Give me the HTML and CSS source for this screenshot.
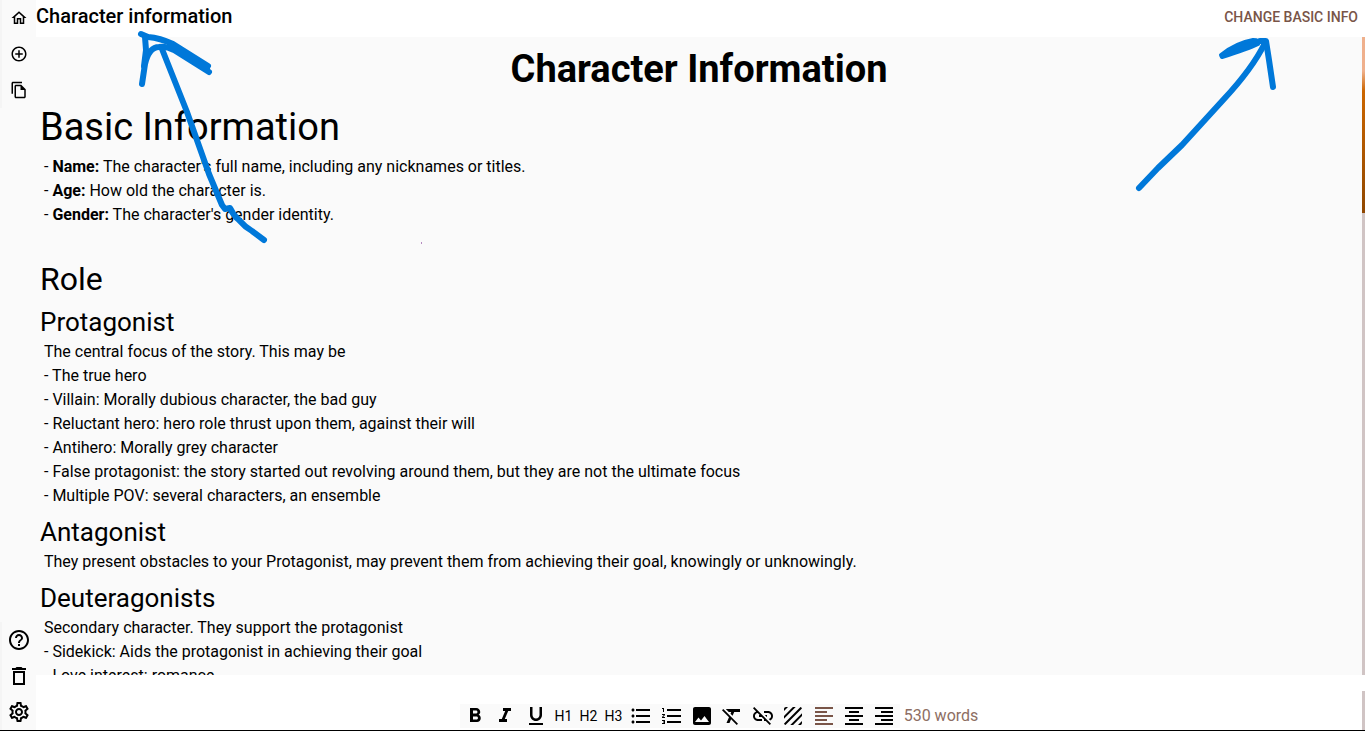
FILE: index.html
```html
<!DOCTYPE html>
<html lang="en">
<head>
<meta charset="utf-8">
<meta name="viewport" content="width=device-width, initial-scale=1">
<title>Character information</title>
<link rel="stylesheet" href="styles.css">
</head>
<body>
<div class="app">
  <nav class="sidebar" aria-label="Main">
    <div class="sidebar-group">
      <button class="nav-button" aria-label="Home"><svg class="icon-small" viewBox="0 0 24 24"><path d="M12 5.69l5 4.5V18h-2v-6H9v6H7v-7.81l5-4.5M12 3L2 12h3v8h6v-6h2v6h6v-8h3L12 3z"/></svg></button>
      <button class="nav-button" aria-label="Add"><svg class="icon-small" viewBox="0 0 24 24"><path d="M13 7h-2v4H7v2h4v4h2v-4h4v-2h-4V7zm-1-5C6.48 2 2 6.48 2 12s4.48 10 10 10 10-4.48 10-10S17.52 2 12 2zm0 18c-4.41 0-8-3.59-8-8s3.59-8 8-8 8 3.59 8 8-3.59 8-8 8z"/></svg></button>
      <button class="nav-button" aria-label="Copy"><svg class="icon-small" viewBox="0 0 24 24"><path d="M16 1H4c-1.1 0-2 .9-2 2v14h2V3h12V1zm-1 4H8c-1.1 0-1.99.9-1.99 2L6 21c0 1.1.89 2 1.99 2H19c1.1 0 2-.9 2-2V11l-6-6zM8 21V7h6v5h5v9H8z"/></svg></button>
    </div>
    <div class="sidebar-group">
      <button class="nav-button" aria-label="Help"><svg class="icon" viewBox="0 0 24 24"><path d="M11 18h2v-2h-2v2zm1-16C6.48 2 2 6.48 2 12s4.48 10 10 10 10-4.48 10-10S17.52 2 12 2zm0 18c-4.41 0-8-3.59-8-8s3.59-8 8-8 8 3.59 8 8-3.59 8-8 8zm0-14c-2.21 0-4 1.79-4 4h2c0-1.1.9-2 2-2s2 .9 2 2c0 2-3 1.75-3 5h2c0-2.25 3-2.5 3-5 0-2.21-1.79-4-4-4z"/></svg></button>
      <button class="nav-button" aria-label="Trash"><svg class="icon" viewBox="0 0 24 24"><path d="M6 21h12V7H6v14zM8 9h8v10H8V9zm7.500-5l-1-1h-5l-1 1H5v2h14V4h-3.500z"/></svg></button>
      <button class="nav-button" aria-label="Settings"><svg class="icon" viewBox="0 0 24 24"><path d="M19.430 12.980c.04-.32.07-.64.07-.98 0-.34-.03-.66-.07-.98l2.110-1.650c.19-.15.24-.42.12-.64l-2-3.460c-.09-.16-.26-.25-.44-.25-.06 0-.12.01-.17.03l-2.490 1c-.52-.4-1.080-.73-1.690-.98l-.38-2.650C14.460 2.180 14.250 2 14 2h-4c-.25 0-.46.18-.49.42l-.38 2.650c-.61.25-1.170.59-1.690.98l-2.490-1c-.06-.02-.12-.03-.18-.03-.17 0-.34.09-.43.25l-2 3.460c-.13.22-.07.49.12.64l2.110 1.650c-.04.32-.07.65-.07.98 0 .33.03.66.07.98l-2.110 1.650c-.19.15-.24.42-.12.64l2 3.460c.09.16.26.25.44.25.06 0 .12-.01.17-.03l2.490-1c.52.4 1.080.73 1.690.98l.38 2.650c.03.24.24.42.49.42h4c.25 0 .46-.18.49-.42l.38-2.650c.61-.25 1.170-.59 1.690-.98l2.490 1c.06.02.12.03.18.03.17 0 .34-.09.43-.25l2-3.460c.12-.22.07-.49-.12-.64l-2.110-1.650zm-1.980-1.710c.04.31.05.52.05.73 0 .21-.02.43-.05.73l-.14 1.130.89.7 1.080.84-.7 1.210-1.270-.51-1.040-.42-.9.68c-.43.32-.84.56-1.250.73l-1.060.43-.16 1.130-.2 1.350h-1.400l-.19-1.350-.16-1.130-1.060-.43c-.43-.18-.83-.41-1.230-.71l-.91-.7-1.060.43-1.270.51-.7-1.210 1.080-.84.89-.7-.14-1.130c-.03-.31-.05-.54-.05-.74s.02-.43.05-.73l.14-1.130-.89-.7-1.080-.84.7-1.210 1.270.51 1.040.42.9-.68c.43-.32.84-.56 1.250-.73l1.060-.43.16-1.130.2-1.350h1.390l.19 1.350.16 1.130 1.060.43c.43.18.83.41 1.230.71l.91.7 1.060-.43 1.270-.51.7 1.210-1.070.85-.89.7.14 1.130zM12 8c-2.210 0-4 1.790-4 4s1.790 4 4 4 4-1.790 4-4-1.790-4-4-4zm0 6c-1.100 0-2-.9-2-2s.9-2 2-2 2 .9 2 2-.9 2-2 2z"/></svg></button>
    </div>
  </nav>

  <div class="workspace">
    <header class="topbar">
      <span class="doc-name">Character information</span>
      <button class="change-button">CHANGE BASIC INFO</button>
    </header>

    <div class="document">
      <main class="page">
        <h1 class="title">Character Information</h1>
        <h2 class="heading">Basic Information</h2>
        <p class="line">- <b>Name:</b> The character's full name, including any nicknames or titles.</p>
        <p class="line">- <b>Age:</b> How old the character is.</p>
        <p class="line">- <b>Gender:</b> The character's gender identity.</p>
        <p class="line"><br></p>
        <h3 class="section">Role</h3>
        <h4 class="subsection">Protagonist</h4>
        <p class="line">The central focus of the story. This may be</p>
        <p class="line">- The true hero</p>
        <p class="line">- Villain: Morally dubious character, the bad guy</p>
        <p class="line">- Reluctant hero: hero role thrust upon them, against their will</p>
        <p class="line">- Antihero: Morally grey character</p>
        <p class="line">- False protagonist: the story started out revolving around them, but they are not the ultimate focus</p>
        <p class="line">- Multiple POV: several characters, an ensemble</p>
        <h4 class="subsection">Antagonist</h4>
        <p class="line">They present obstacles to your Protagonist, may prevent them from achieving their goal, knowingly or unknowingly.</p>
        <h4 class="subsection">Deuteragonists</h4>
        <p class="line">Secondary character. They support the protagonist</p>
        <p class="line">- Sidekick: Aids the protagonist in achieving their goal</p>
        <p class="line">- Love interest: romance</p>
      </main>
      <div class="scroll-track"><div class="scroll-thumb"></div></div>
    </div>

    <footer class="footer">
      <div class="toolbar-row">
        <div class="toolbar" role="toolbar" aria-label="Formatting">
          <button class="tool" aria-label="Bold"><svg class="icon" viewBox="0 0 24 24"><path d="M15.600 10.790c.97-.67 1.650-1.770 1.650-2.790 0-2.260-1.750-4-4-4H7v14h7.040c2.090 0 3.710-1.700 3.710-3.790 0-1.520-.86-2.820-2.150-3.420zM10 6.500h3c.83 0 1.500.67 1.500 1.500s-.67 1.500-1.500 1.500h-3v-3zm3.500 9H10v-3h3.500c.83 0 1.500.67 1.500 1.500s-.67 1.500-1.500 1.500z"/></svg></button>
          <button class="tool" aria-label="Italic"><svg class="icon" viewBox="0 0 24 24"><path d="M10 4v3h2.210l-3.420 8H6v3h8v-3h-2.210l3.420-8H18V4z"/></svg></button>
          <button class="tool" aria-label="Underline"><svg class="icon" viewBox="0 0 24 24"><path d="M12 17c3.310 0 6-2.690 6-6V3h-2.500v8c0 1.930-1.570 3.500-3.500 3.500S8.500 12.930 8.500 11V3H6v8c0 3.310 2.690 6 6 6zm-7 2v2h14v-2H5z"/></svg></button>
          <button class="tool">H1</button>
          <button class="tool">H2</button>
          <button class="tool">H3</button>
          <button class="tool" aria-label="Bulleted list"><svg class="icon" viewBox="0 0 24 24"><path d="M4 10.500c-.83 0-1.500.67-1.500 1.500s.67 1.500 1.500 1.500 1.500-.67 1.500-1.500-.67-1.500-1.500-1.500zm0-6c-.83 0-1.500.67-1.500 1.500S3.170 7.500 4 7.500 5.500 6.830 5.500 6 4.830 4.500 4 4.500zm0 12c-.83 0-1.500.68-1.500 1.500s.68 1.500 1.500 1.500 1.500-.68 1.500-1.500-.67-1.500-1.500-1.500zM7 19h14v-2H7v2zm0-6h14v-2H7v2zm0-8v2h14V5H7z"/></svg></button>
          <button class="tool" aria-label="Numbered list"><svg class="icon" viewBox="0 0 24 24"><path d="M2 17h2v.5H3v1h1v.5H2v1h3v-4H2v1zm1-9h1V4H2v1h1v3zm-1 3h1.800L2 13.100v.9h3v-1H3.200L5 10.900V10H2v1zm5-6v2h14V5H7zm0 14h14v-2H7v2zm0-6h14v-2H7v2z"/></svg></button>
          <button class="tool" aria-label="Image"><svg class="icon" viewBox="0 0 24 24"><path d="M21 19V5c0-1.100-.9-2-2-2H5c-1.100 0-2 .9-2 2v14c0 1.100.9 2 2 2h14c1.100 0 2-.9 2-2zM8.500 13.500l2.500 3.010L14.500 12l4.500 6H5l3.500-4.500z"/></svg></button>
          <button class="tool" aria-label="Clear formatting"><svg class="icon" viewBox="0 0 24 24"><path d="M3.270 5L2 6.270l6.970 6.970L6.500 19h3l1.570-3.660L16.730 21 18 19.730 3.550 5.270 3.270 5zM6 5v.18L8.820 8h2.400l-.72 1.680 2.100 2.100L14.210 8H20V5H6z"/></svg></button>
          <button class="tool" aria-label="Remove link"><svg class="icon" viewBox="0 0 24 24"><path d="M17 7h-4v1.900h4c1.710 0 3.100 1.390 3.100 3.100 0 1.430-.98 2.630-2.310 2.980l1.460 1.460C20.880 15.610 22 13.950 22 12c0-2.760-2.240-5-5-5zm-1 4h-2.190l2 2H16v-2zM2 4.270l3.110 3.110C3.290 8.120 2 9.910 2 12c0 2.760 2.240 5 5 5h4v-1.900H7c-1.710 0-3.100-1.390-3.100-3.100 0-1.590 1.210-2.900 2.760-3.070L8.730 11H8v2h2.730L13 15.270V17h1.730l4.010 4L20 19.740 3.270 3 2 4.270z"/></svg></button>
          <button class="tool" aria-label="Texture"><svg class="icon" viewBox="0 0 24 24"><path d="M19.510 3.080L3.080 19.510c.09.34.27.65.51.9.25.24.56.42.9.51L20.930 4.490c-.19-.69-.73-1.230-1.420-1.410zM11.880 3L3 11.880v2.830L14.710 3h-2.830zM5 3c-1.100 0-2 .9-2 2v2l4-4H5zm14 18c.55 0 1.050-.22 1.410-.59.37-.36.59-.86.59-1.410v-2l-4 4h2zm-9.710 0h2.830L21 12.120V9.290L9.290 21z"/></svg></button>
          <button class="tool tool-active" aria-label="Align left" aria-pressed="true"><svg class="icon" viewBox="0 0 24 24"><path d="M15 15H3v2h12v-2zm0-8H3v2h12V7zM3 13h18v-2H3v2zm0 8h18v-2H3v2zM3 3v2h18V3H3z"/></svg></button>
          <button class="tool" aria-label="Align center"><svg class="icon" viewBox="0 0 24 24"><path d="M7 15v2h10v-2H7zm-4 6h18v-2H3v2zm0-8h18v-2H3v2zm4-6v2h10V7H7zM3 3v2h18V3H3z"/></svg></button>
          <button class="tool" aria-label="Align right"><svg class="icon" viewBox="0 0 24 24"><path d="M3 21h18v-2H3v2zm6-4h12v-2H9v2zm-6-4h18v-2H3v2zm6-4h12V7H9v2zM3 3v2h18V3H3z"/></svg></button>
        </div>
        <span class="word-count">530 words</span>
      </div>
      <div class="outer-track"></div>
    </footer>
  </div>

  <svg class="ink ink-left" viewBox="0 0 430 250" aria-hidden="true">
    <path d="M141 34L148 37Q160 38 173 44L208 66"/>
    <path d="M142 84L145 64Q149 47 159 47Q166 46 174 50L209 72"/>
    <path d="M172 47L207 69M145 37L146 50L144 66"/>
    <path d="M162 49L187 112L209 174L222 205L225 209L230 208Q233 215 239 220Q245 227 252 231L264 240"/>
    <path class="ink-speck" d="M421.500 242v2"/>
  </svg>
  <svg class="ink ink-right" viewBox="1115 0 250 250" aria-hidden="true">
    <path d="M1139 188L1158 168L1182 145L1224 99Q1252 69 1265 43"/>
    <path d="M1260 41L1266 41L1269 60L1273 87"/>
    <path class="ink-blob" d="M1221 55Q1236 43 1253 40Q1260 40 1258 44Q1248 49 1222 57Z"/>
  </svg>
</div>
</body>
</html>
```
FILE: styles.css
```css
* {
  box-sizing: border-box;
}

body {
  margin: 0;
  background: #fafafa;
  color: #000;
  font-family: Roboto, "Liberation Sans", sans-serif;
  font-size: 16px;
  line-height: 24px;
}

button {
  margin: 0;
  padding: 0;
  border: 0;
  background: none;
  color: inherit;
  font: inherit;
  cursor: pointer;
}

svg {
  display: block;
  fill: currentColor;
}

.app {
  position: relative;
  display: flex;
  height: 100vh;
  border-bottom: 1px solid #000;
  overflow: hidden;
}

.sidebar {
  display: flex;
  flex: none;
  flex-direction: column;
  justify-content: space-between;
  width: 36px;
}

.sidebar-group {
  display: flex;
  flex-direction: column;
  border-left: 2px solid #f5f5f5;
}

.nav-button {
  display: grid;
  place-items: center;
  height: 36px;
}

.icon {
  width: 24px;
  height: 24px;
}

.icon-small {
  width: 18px;
  height: 18px;
}

.workspace {
  display: flex;
  flex: 1;
  flex-direction: column;
  min-width: 0;
}

.topbar {
  display: flex;
  flex: none;
  align-items: center;
  justify-content: space-between;
  height: 37px;
  padding: 0 7px 6px 0;
  background: #fff;
}

.doc-name {
  font-size: 20px;
  font-weight: 500;
}

.change-button {
  padding-top: 2px;
  color: #795548;
  font-size: 14px;
  font-weight: 500;
}

.document {
  display: flex;
  flex: 1;
  min-height: 0;
}

.page {
  flex: 1;
  min-width: 0;
  padding: 8px 4px 0;
  overflow: hidden;
}

.title,
.heading,
.section,
.subsection,
.line {
  margin: 0;
}

.title {
  font-size: 38px;
  font-weight: 700;
  line-height: 48px;
  text-align: center;
}

.heading {
  padding: 10px 0 4px;
  font-size: 38px;
  font-weight: 400;
  line-height: 48px;
}

.section {
  padding-top: 9px;
  font-size: 32px;
  font-weight: 400;
  line-height: 38px;
}

.subsection {
  padding: 8px 0 2px;
  font-size: 26px;
  font-weight: 400;
  line-height: 32px;
}

.line {
  padding-left: 4px;
}

.scroll-track {
  flex: none;
  width: 3px;
  background: #d0c4c4;
}

.scroll-thumb {
  height: 176px;
  background: linear-gradient(#efb08c 0, #efb08c 34px, #cc6600 54px, #8f4700 100%);
}

.footer {
  display: flex;
  flex: none;
  height: 55px;
  padding-top: 16px;
  background: #fff;
}

.toolbar-row {
  display: flex;
  flex: 1;
  align-items: flex-end;
  justify-content: center;
  padding: 0 0 2px 40px;
}

.toolbar {
  display: grid;
  grid-template-columns: repeat(3, 1fr) repeat(3, 25px) repeat(9, 1fr);
  width: 440px;
  background: #fafafa;
}

.tool {
  display: grid;
  place-items: center;
  height: 24px;
  font-size: 14px;
}

.tool-active {
  color: #795548;
}

.word-count {
  padding-left: 4px;
  color: #8d6e63;
}

.outer-track {
  width: 3px;
  background: #d0c4c4;
}

.ink {
  position: absolute;
  top: 0;
  height: 250px;
  fill: none;
  stroke: #0078d9;
  stroke-width: 6px;
  stroke-linecap: round;
  stroke-linejoin: round;
  pointer-events: none;
}

.ink-left {
  left: 0;
  width: 430px;
}

.ink-right {
  right: 0;
  width: 250px;
}

.ink-blob {
  fill: #0078d9;
  stroke-width: 4px;
}

.ink-speck {
  stroke: #b58ac0;
  stroke-width: 1px;
  stroke-linecap: butt;
}
```
